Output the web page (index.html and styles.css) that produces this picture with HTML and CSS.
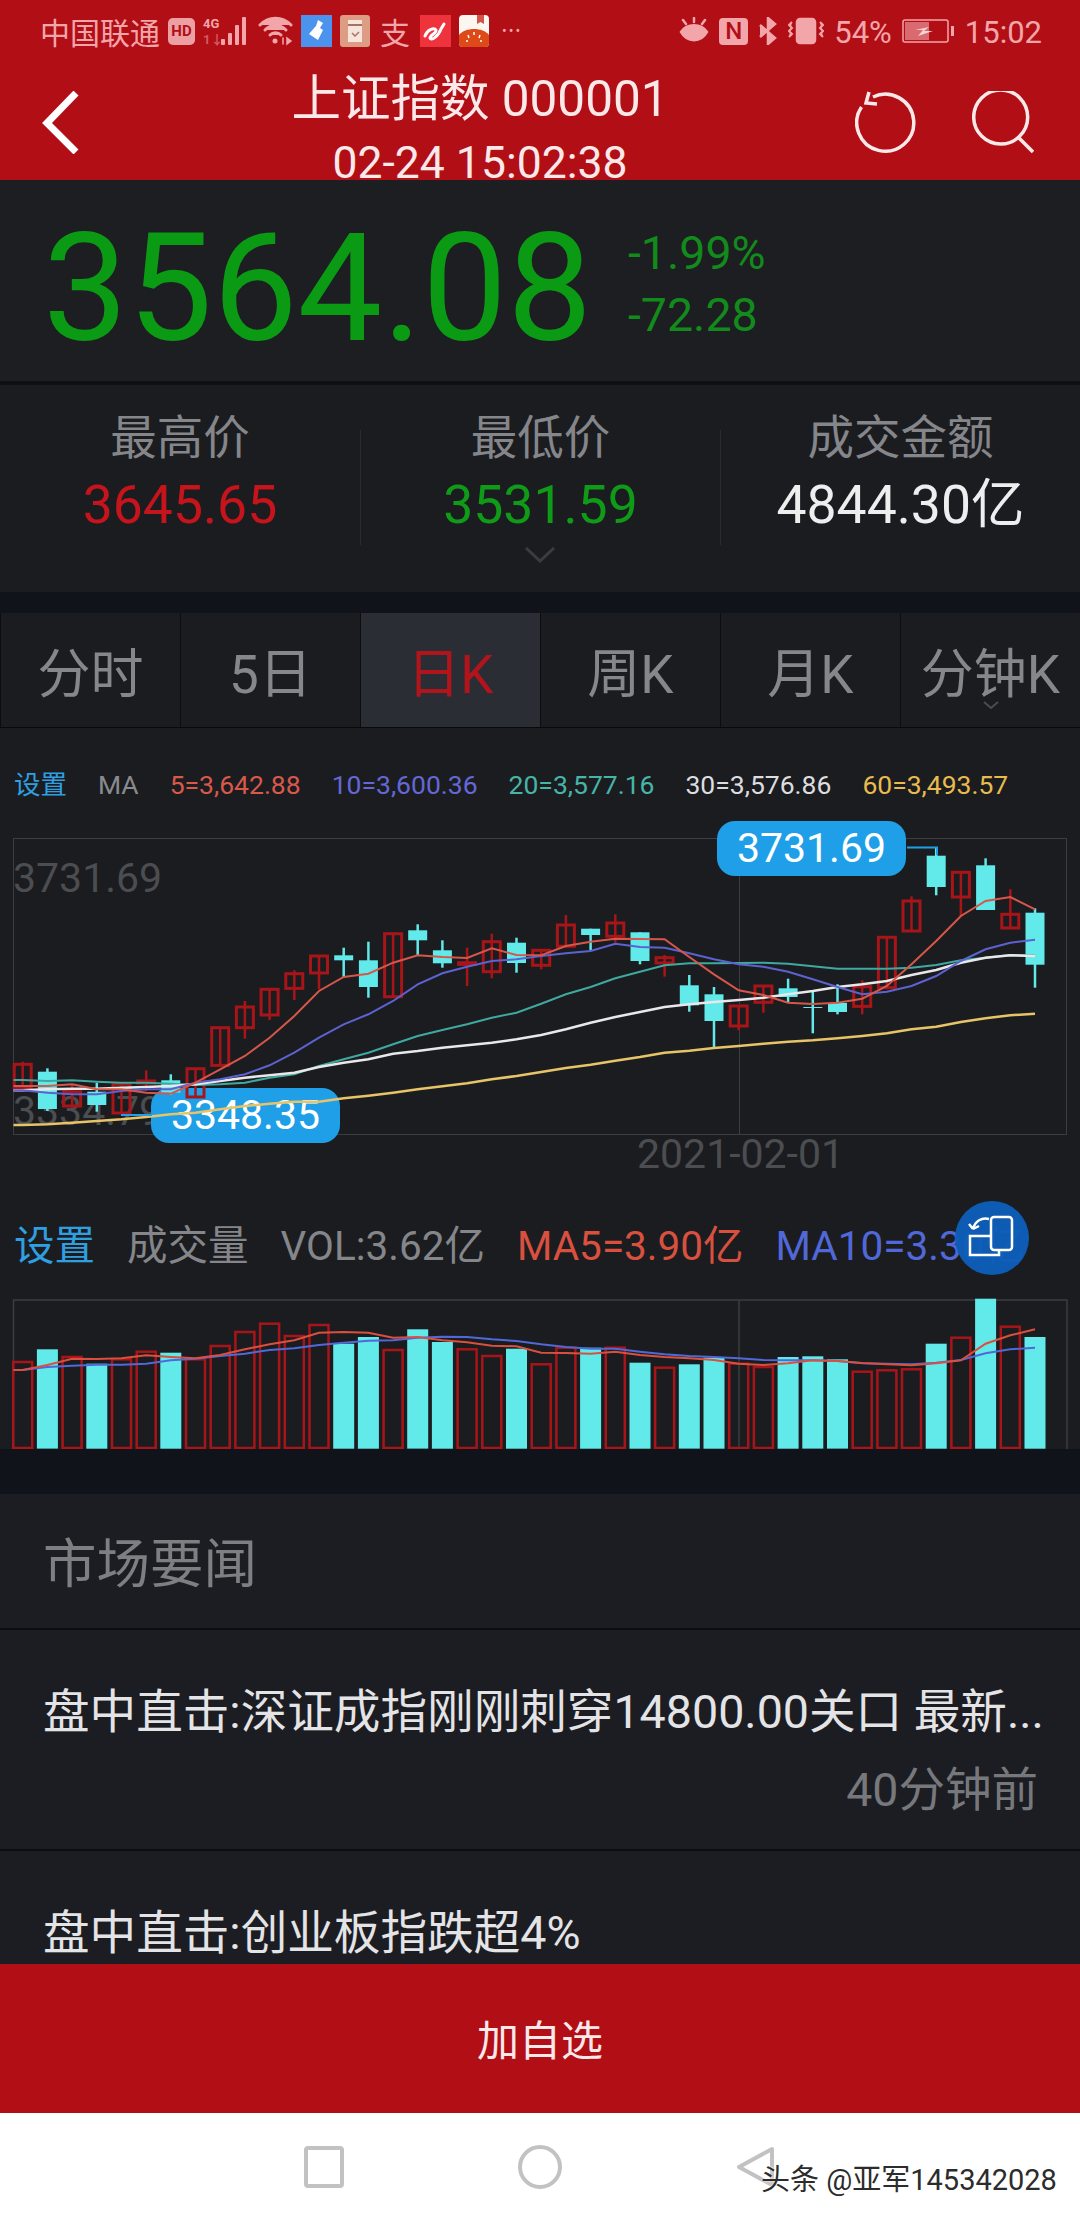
FILE: index.html
```html
<!DOCTYPE html>
<html lang="zh-CN">
<head>
    <meta charset="UTF-8">
    <meta name="viewport" content="width=device-width, initial-scale=1.0">
    <title>上证指数 000001</title>
    <link rel="stylesheet" href="styles.css">
</head>
<body>
    <header class="top">
        <div class="status-bar">
            <div class="status-left">
                <span class="carrier">中国联通</span>
                <span class="hd-badge">HD</span>
                <svg class="ic" width="47" height="30" viewBox="0 0 47 30">
                    <text x="0" y="12" class="mini-text">4G</text>
                    <text x="0" y="28" class="mini-text dim">1↓</text>
                    <rect x="18" y="23" width="4" height="6" rx="1"/>
                    <rect x="25" y="17" width="4" height="12" rx="1"/>
                    <rect x="32" y="9" width="4" height="20" rx="1"/>
                    <rect x="39" y="1" width="4" height="28" rx="1"/>
                </svg>
                <svg class="ic" width="35" height="30" viewBox="0 0 35 30" fill="none" stroke="#f2a6aa" stroke-width="3" stroke-linecap="round">
                    <path d="M2 9C11 0 24 0 33 9"/>
                    <path d="M7 14C13 8 22 8 28 14"/>
                    <path d="M12 19C15 16 20 16 23 19"/>
                    <circle cx="17" cy="25" r="2.5" fill="#f2a6aa" stroke="none"/>
                    <path d="M25 22v6M33 25l-4 -3v6z" stroke-width="1.5"/>
                </svg>
                <svg class="ic" width="31" height="32" viewBox="0 0 31 32">
                    <rect width="31" height="32" fill="#4c93ee"/>
                    <path d="M17 5l5 3-3 5 3 2-5 10-9-6 6-7 1-1z" fill="#fff"/>
                </svg>
                <svg class="ic" width="30" height="32" viewBox="0 0 30 32">
                    <rect width="30" height="32" rx="3" fill="#dd9c84"/>
                    <rect x="8" y="5" width="14" height="22" fill="#f6e5dc"/>
                    <rect x="8" y="9" width="14" height="2" fill="#a8735e"/>
                    <path d="M12 18l3 3 4-4" fill="none" stroke="#a8735e" stroke-width="1.5"/>
                </svg>
                <span class="zhi">支</span>
                <svg class="ic" width="31" height="32" viewBox="0 0 31 32">
                    <rect width="31" height="32" fill="#ee333d"/>
                    <path d="M5 21c2-6 9-9 11-6 1 3-6 5-6 8 1 3 8-1 11-9l3-5" fill="none" stroke="#fff" stroke-width="3" stroke-linecap="round"/>
                </svg>
                <svg class="ic" width="30" height="32" viewBox="0 0 30 32">
                    <rect width="30" height="32" rx="4" fill="#fdf6f0"/>
                    <path d="M0 20c6-8 24-8 30 0v8a4 4 0 0 1-4 4H4a4 4 0 0 1-4-4z" fill="#dd4a17"/>
                    <path d="M18 0h7v9l-3.500-2-3.500 2z" fill="#d2534a"/>
                    <path d="M15 17v3M9 20l1 3M21 20l-1 3M7 26h2M21 26h2" stroke="#fff" stroke-width="1.500"/>
                </svg>
                <span class="more-dots">•••</span>
            </div>
            <div class="status-right">
                <svg class="ic" width="30" height="28" viewBox="0 0 30 28" fill="none" stroke="#f2a6aa" stroke-width="2.500" stroke-linecap="round">
                    <path d="M2 15C8 6 22 6 28 15C22 26 8 26 2 15z"/>
                    <circle cx="15" cy="15" r="5" fill="#f2a6aa" stroke="none"/>
                    <path d="M4 3l3 4M15 1v4M26 3l-3 4"/>
                </svg>
                <span class="nfc">N</span>
                <svg class="ic" width="20" height="28" viewBox="0 0 20 28" fill="none" stroke="#f2a6aa" stroke-width="2.500">
                    <path d="M2 8l15 13-7 6V1l7 6L2 20"/>
                </svg>
                <svg class="ic" width="36" height="28" viewBox="0 0 36 28" fill="none" stroke="#f2a6aa" stroke-width="2.500">
                    <rect x="9" y="2" width="18" height="24" rx="3"/>
                    <path d="M4 5l-3 3 3 3-3 3 3 3-3 3M32 5l3 3-3 3 3 3-3 3 3 3" stroke-width="2"/>
                </svg>
                <span class="battery-pct">54%</span>
                <svg class="ic" width="53" height="24" viewBox="0 0 53 24">
                    <rect x="1" y="1" width="45" height="22" rx="2" fill="none" stroke="#f2a6aa" stroke-width="1.500"/>
                    <rect x="3" y="3" width="24" height="18" fill="#d96b70"/>
                    <rect x="49" y="7" width="3" height="10" fill="#f2a6aa"/>
                    <path d="M13 11l14-3-5 4h9l-15 5 5-6z" fill="#f6d2d2"/>
                </svg>
                <span class="clock">15:02</span>
            </div>
        </div>
        <div class="nav-row">
            <svg class="back-btn" width="37" height="63" viewBox="0 0 37 63" fill="none" stroke="#fff" stroke-width="7">
                <path d="M34 2L5 32l29 29"/>
            </svg>
            <div class="title-block">
                <div class="title">上证指数 000001</div>
                <div class="subtitle">02-24 15:02:38</div>
            </div>
            <div class="nav-actions">
                <svg width="62" height="64" viewBox="0 0 62 64" fill="none" stroke="#fbe9ea" stroke-width="3.500">
                    <path d="M18 6A28.500 28.500 0 1 1 6.500 16"/>
                    <path d="M14 1l-3 11 11 1"/>
                </svg>
                <svg width="62" height="64" viewBox="0 0 62 64" fill="none" stroke="#fbe9ea" stroke-width="3.500">
                    <circle cx="28.700" cy="26" r="27"/>
                    <path d="M46 46l15 15"/>
                </svg>
            </div>
        </div>
    </header>

    <main class="content">
        <section class="quote">
            <div class="last-price">3564.08</div>
            <div class="change">
                <div>-1.99%</div>
                <div>-72.28</div>
            </div>
        </section>

        <section class="stats">
            <div class="stat">
                <div class="stat-label">最高价</div>
                <div class="stat-value up">3645.65</div>
            </div>
            <div class="stat">
                <div class="stat-label">最低价</div>
                <div class="stat-value down">3531.59</div>
            </div>
            <div class="stat">
                <div class="stat-label">成交金额</div>
                <div class="stat-value">4844.30亿</div>
            </div>
            <svg class="expand" width="30" height="16" viewBox="0 0 30 16" fill="none" stroke="#3a3c42" stroke-width="3">
                <path d="M1 1l14 13L29 1"/>
            </svg>
        </section>

        <nav class="tabs">
            <div class="tab">分时</div>
            <div class="tab">5日</div>
            <div class="tab active">日K</div>
            <div class="tab">周K</div>
            <div class="tab">月K</div>
            <div class="tab">分钟K
                <svg class="tab-arrow" width="16" height="9" viewBox="0 0 16 9" fill="none" stroke="#4a4c52" stroke-width="2">
                    <path d="M1 1l7 6 7-6"/>
                </svg>
            </div>
        </nav>

        <div class="ma-legend">
            <span class="link">设置</span>
            <span class="muted">MA</span>
            <span class="ma5">5=3,642.88</span>
            <span class="ma10">10=3,600.36</span>
            <span class="ma20">20=3,577.16</span>
            <span class="ma30">30=3,576.86</span>
            <span class="ma60">60=3,493.57</span>
        </div>

        <section class="kline">
            <div class="chart-frame"></div>
            <span class="axis-label axis-high">3731.69</span>
            <span class="axis-label axis-low">3334.79</span>
            <span class="axis-label axis-date">2021-02-01</span>
            <span class="bubble bubble-low">3348.35</span>
            <svg id="klineChart" class="chart" width="1080" height="330" viewBox="0 0 1080 330"></svg>
            <span class="bubble bubble-high">3731.69</span>
        </section>

        <section class="volume">
            <div class="vol-legend">
                <span class="link">设置</span>
                <span class="gray">成交量</span>
                <span class="gray">VOL:3.62亿</span>
                <span class="vol-ma5">MA5=3.90亿</span>
                <span class="vol-ma10">MA10=3.30亿</span>
            </div>
            <svg id="volChart" class="chart" width="1080" height="158" viewBox="0 90 1080 158"></svg>
            <div class="float-btn">
                <svg width="74" height="74" viewBox="0 0 74 74" fill="none" stroke="#fff" stroke-width="2.500">
                    <rect x="36" y="16" width="21" height="33" rx="3"/>
                    <path d="M36 35H15v19h29v-5"/>
                    <path d="M18 28C20 20 27 16 34 18M18 28l-4-5M18 28l6-3"/>
                </svg>
            </div>
        </section>

        <section class="news">
            <h2 class="news-head">市场要闻</h2>
            <div class="news-item">
                <div class="news-title">盘中直击:深证成指刚刚刺穿14800.00关口 最新...</div>
                <div class="news-time">40分钟前</div>
            </div>
            <div class="news-item">
                <div class="news-title">盘中直击:创业板指跌超4%</div>
            </div>
        </section>
    </main>

    <div class="add-bar">加自选</div>

    <footer class="sys-nav">
        <svg width="40" height="42" viewBox="0 0 40 42" fill="none" stroke="#c2c2c2" stroke-width="4">
            <rect x="2" y="2" width="36" height="38" rx="2"/>
        </svg>
        <svg width="44" height="44" viewBox="0 0 44 44" fill="none" stroke="#c2c2c2" stroke-width="4">
            <circle cx="22" cy="22" r="20"/>
        </svg>
        <svg width="40" height="42" viewBox="0 0 40 42" fill="none" stroke="#c2c2c2" stroke-width="4" stroke-linejoin="round">
            <path d="M36 3L3 21l33 18z"/>
        </svg>
        <span class="watermark">头条 @亚军145342028</span>
    </footer>

    <script src="chart.js"></script>
</body>
</html>
```

FILE: styles.css
```css
* {
    box-sizing: border-box;
}

body {
    margin: 0;
    width: 1080px;
    height: 2220px;
    display: flex;
    flex-direction: column;
    overflow: hidden;
    background: #1b1c20;
    font-family: Roboto, "Noto Sans CJK SC", sans-serif;
}

/* top red header */
.top {
    height: 180px;
    flex: none;
    background: #b20e16;
    color: #fbe9ea;
}

.status-bar {
    height: 62px;
    padding: 0 38px 0 40px;
    display: flex;
    justify-content: space-between;
    align-items: center;
    color: #f2a6aa;
}

.status-left,
.status-right {
    display: flex;
    align-items: center;
    gap: 8px;
}

.status-right {
    gap: 10px;
}

.ic {
    display: block;
    fill: #f2a6aa;
}

.carrier {
    font-size: 30px;
}

.hd-badge {
    width: 27px;
    height: 27px;
    border-radius: 5px;
    background: #eda0a4;
    color: #b20e16;
    font-size: 15px;
    font-weight: 700;
    line-height: 27px;
    text-align: center;
}

.mini-text {
    font-size: 13px;
    font-weight: 700;
}

.dim {
    opacity: 0.5;
}

.zhi {
    width: 34px;
    font-size: 30px;
    text-align: center;
}

.more-dots {
    margin-left: 5px;
    font-size: 14px;
    letter-spacing: 2px;
}

.nfc {
    width: 29px;
    height: 27px;
    border-radius: 4px;
    background: #f2a6aa;
    color: #b20e16;
    font-size: 24px;
    font-weight: 500;
    line-height: 27px;
    text-align: center;
}

.battery-pct,
.clock {
    padding-top: 3px;
    font-size: 31px;
}

.nav-row {
    height: 118px;
    padding: 0 46px 0 42px;
    display: flex;
    align-items: flex-start;
}

.back-btn {
    margin-top: 29px;
    flex: none;
}

.title-block {
    margin-left: 211px;
    width: 380px;
    text-align: center;
    white-space: nowrap;
}

.title {
    font-size: 49.500px;
    line-height: 60px;
    margin-top: 7px;
}

.subtitle {
    font-size: 44.500px;
    line-height: 44px;
    margin-top: 12px;
}

.nav-actions {
    margin-left: auto;
    margin-top: 29px;
    display: flex;
    gap: 55px;
}

.content {
    flex: 1;
    min-height: 0;
    overflow: hidden;
}

/* price block */
.quote {
    height: 205px;
    padding: 42px 0 0 43px;
    display: flex;
    background: #1c1e21;
    border-bottom: 4px solid #0f1013;
}

.last-price {
    font-size: 151px;
    line-height: 134px;
    color: #0a9a14;
}

.change {
    margin-left: 36px;
    font-size: 46.500px;
    line-height: 62px;
    color: #128a1c;
}

.stats {
    position: relative;
    height: 207px;
    display: grid;
    grid-template-columns: repeat(3, 360px);
    background: #1b1c20;
}

.stat {
    margin-top: 45px;
    height: 115px;
    text-align: center;
    border-left: 1px solid #2a2b2f;
}

.stat:first-child {
    border-left: 0;
}

.stat-label {
    margin-top: -22px;
    font-size: 46.500px;
    line-height: 60px;
    color: #85868a;
}

.stat-value {
    margin-top: 7px;
    font-size: 53.500px;
    line-height: 60px;
    color: #eeeeef;
}

.stat-value.up {
    color: #c5141b;
}

.stat-value.down {
    color: #0f9a18;
}

.expand {
    position: absolute;
    left: 525px;
    top: 162px;
}

.tabs {
    margin-top: 21px;
    height: 115px;
    display: grid;
    grid-template-columns: repeat(6, 1fr);
    grid-auto-rows: 114px;
    box-shadow: 0 -21px 0 #11131a;
    border-bottom: 1px solid #08090b;
    background: #1b1c20;
}

.tab {
    position: relative;
    height: 114px;
    font-size: 53px;
    line-height: 124px;
    text-align: center;
    white-space: nowrap;
    color: #86878b;
    border-left: 1px solid #0c0d10;
}

.tab.active {
    background: #2b2d35;
    color: #b2141c;
}

.tab-arrow {
    position: absolute;
    left: 82px;
    top: 88px;
}

/* legends */
.ma-legend {
    height: 93px;
    padding: 42px 0 0 14px;
    display: flex;
    gap: 31px;
    font-size: 26.500px;
    line-height: 30px;
    white-space: nowrap;
}

.link {
    color: #2f9fe0;
}

.muted {
    color: #8a8b8f;
}

.ma5 { color: #d9584a; }
.ma10 { color: #6468d6; }
.ma20 { color: #46b5a8; }
.ma30 { color: #dddddf; }
.ma60 { color: #e8bb4e; }

/* candlestick area */
.kline {
    position: relative;
    height: 370px;
}

.chart {
    display: block;
    position: relative;
}

.chart-frame {
    position: absolute;
    left: 13px;
    top: 17px;
    width: 1054px;
    height: 297px;
    border: 1.500px solid #3c3d40;
}

.chart-frame::after {
    content: "";
    position: absolute;
    left: 725px;
    top: 0;
    bottom: 0;
    border-left: 1.500px solid #3c3d40;
}

.axis-label {
    position: absolute;
    left: 13px;
    font-size: 41px;
    line-height: 40px;
    color: #4c4d50;
}

.axis-high {
    top: 37px;
}

.axis-low {
    top: 270px;
}

.axis-date {
    left: 637px;
    top: 313px;
}

.bubble {
    position: absolute;
    height: 55px;
    width: 189px;
    border-radius: 18px;
    background: #1f9fe8;
    color: #fff;
    font-size: 41px;
    line-height: 55px;
    text-align: center;
}

.bubble-low {
    left: 151px;
    top: 267px;
}

.bubble-high {
    left: 717px;
    top: 0;
}

/* volume area */
.volume {
    position: relative;
}

.vol-legend {
    height: 100px;
    padding: 35px 0 0 14px;
    display: flex;
    gap: 32px;
    font-size: 40.500px;
    line-height: 40px;
    white-space: nowrap;
}

.gray {
    color: #85868a;
}

.vol-ma5 {
    color: #d9503f;
}

.vol-ma10 {
    color: #5068d8;
}

.float-btn {
    position: absolute;
    left: 955px;
    top: 10px;
    width: 74px;
    height: 74px;
    border-radius: 50%;
    background: rgba(13, 94, 184, 0.96);
}

.float-btn svg {
    display: block;
}

/* news list */
.news {
    margin-top: 45px;
    box-shadow: 0 -45px 0 #11131a;
    background: #1b1d23;
}

.news-head {
    margin: 0;
    height: 136px;
    padding: 0 43px;
    font-size: 53.500px;
    font-weight: 400;
    line-height: 142px;
    color: #7e7f83;
    border-bottom: 2px solid #0c0d10;
}

.news-item {
    height: 221px;
    padding: 52px 42px 0 43px;
    border-bottom: 2px solid #0c0d10;
}

.news-title {
    font-size: 46.600px;
    line-height: 60px;
    color: #e4e4e6;
    white-space: nowrap;
}

.news-time {
    margin-top: 18px;
    font-size: 46.500px;
    line-height: 60px;
    text-align: right;
    color: #77787c;
}

.add-bar {
    flex: none;
    height: 149px;
    background: #b20e16;
    color: #fbe9ea;
    font-size: 42px;
    line-height: 155px;
    text-align: center;
}

.sys-nav {
    flex: none;
    position: relative;
    height: 107px;
    background: #fff;
    padding-left: 304px;
    display: flex;
    align-items: center;
    gap: 174px;
}

.watermark {
    position: absolute;
    left: 761px;
    top: 49px;
    font-size: 29px;
    line-height: 36px;
    color: #2c2c2c;
    white-space: nowrap;
    text-shadow: 0 0 3px #fff;
}
```

FILE: chart.js
```js
// all chart values are in thirds of a pixel, top of the svg = 0
const CYAN = '#62e9ea';
const RED = '#a81519';

// box top, box bottom, wick top, wick bottom, up = red
const candles = [
    [730, 800, 722, 808, 1], [752, 864, 742, 870, 0], [812, 855, 790, 860, 1], [812, 852, 785, 872, 0],
    [790, 876, 785, 880, 1], [780, 786, 748, 810, 1], [778, 815, 760, 822, 0], [743, 828, 743, 828, 1],
    [620, 733, 620, 733, 1], [558, 620, 540, 653, 1], [505, 582, 505, 597, 1], [458, 502, 448, 537, 1],
    [405, 456, 405, 505, 1], [403, 418, 380, 470, 0], [418, 498, 362, 530, 0], [338, 527, 338, 527, 1],
    [328, 358, 310, 405, 0], [388, 427, 358, 440, 0], [425, 430, 380, 495, 1], [362, 452, 338, 472, 1],
    [365, 426, 350, 455, 0], [388, 433, 385, 445, 1], [312, 376, 282, 376, 1], [323, 342, 323, 388, 0],
    [306, 346, 280, 365, 1], [334, 420, 334, 430, 0], [410, 426, 402, 467, 1], [493, 553, 462, 572, 0],
    [520, 600, 498, 678, 0], [555, 615, 555, 628, 1], [495, 544, 495, 575, 1], [502, 528, 473, 543, 0],
    [558, 561, 510, 637, 0], [546, 573, 490, 580, 0], [497, 556, 478, 580, 1], [349, 500, 349, 505, 1],
    [240, 330, 226, 330, 1], [104, 198, 80, 223, 0], [154, 228, 150, 285, 1], [133, 267, 112, 267, 0],
    [280, 321, 205, 321, 1], [275, 431, 262, 500, 0]
];

// colour, stroke width, values
const maLines = [
    ['#e8c468', 2.5, [912, 910, 905, 900, 895, 888, 880, 875, 865, 855, 848, 842, 842, 832, 824, 815, 805, 796, 787, 775, 765, 753, 741, 731, 719, 708, 695, 689, 681, 675, 668, 662, 658, 652, 645, 637, 625, 617, 603, 592, 583, 578]],
    ['#3fa9a0', 2, [777, 780, 778, 782, 785, 785, 788, 792, 790, 785, 770, 760, 735, 715, 695, 670, 645, 627, 610, 590, 575, 548, 520, 498, 472, 452, 433, 427, 427, 426, 425, 428, 436, 443, 443, 443, 440, 432, 418, 410, 402, 403]],
    ['#e8e8ea', 2.5, [808, 805, 803, 803, 800, 798, 795, 790, 780, 770, 763, 755, 738, 725, 715, 698, 690, 680, 673, 665, 655, 642, 625, 605, 588, 573, 558, 550, 543, 537, 530, 520, 510, 498, 490, 480, 462, 447, 425, 410, 403, 405]],
    ['#5c62d0', 2, [808, 815, 820, 820, 810, 805, 805, 785, 775, 760, 733, 695, 650, 610, 580, 540, 490, 457, 437, 420, 415, 405, 397, 390, 368, 378, 380, 397, 415, 430, 437, 452, 475, 498, 520, 512, 495, 465, 420, 385, 365, 356]],
    ['#d6574a', 2, [795, 795, 790, 805, 805, 815, 818, 785, 745, 705, 650, 585, 510, 468, 458, 425, 403, 408, 411, 382, 402, 403, 375, 362, 353, 354, 355, 408, 460, 508, 522, 545, 549, 545, 533, 495, 430, 360, 285, 240, 228, 265]]
];

// bar top, up = red
const volumes = [
    [483, 1], [445, 0], [468, 1], [488, 0], [475, 1], [452, 1], [455, 0], [475, 1], [435, 1], [393, 1], [368, 1],
    [405, 1], [372, 1], [428, 0], [408, 0], [447, 1], [385, 0], [423, 0], [445, 1], [465, 1], [443, 0], [490, 1],
    [440, 1], [440, 0], [440, 1], [485, 0], [500, 1], [490, 0], [470, 0], [488, 1], [498, 1], [468, 0], [466, 0],
    [475, 0], [512, 1], [508, 1], [505, 1], [428, 0], [410, 1], [293, 0], [377, 1], [408, 0]
];

const volLines = [
    ['#5068d8', 2, [507, 498, 494, 491, 491, 488, 478, 473, 465, 458, 447, 442, 432, 425, 419, 418, 410, 407, 408, 415, 420, 430, 438, 443, 443, 452, 460, 465, 468, 472, 477, 478, 478, 480, 487, 488, 490, 485, 477, 457, 445, 440]],
    ['#d9503f', 2, [507, 492, 473, 474, 472, 463, 468, 472, 462, 445, 430, 418, 395, 393, 395, 410, 408, 418, 424, 434, 436, 455, 456, 458, 452, 462, 468, 472, 477, 488, 492, 487, 478, 480, 486, 490, 493, 487, 478, 428, 403, 385]]
];

const px = v => (v / 3).toFixed(1);
const cx = i => (22.7 + i * 24.69).toFixed(1);

// lines run in from the left edge of the frame
function polyline(line) {
    const values = line[2];
    const points = values.map((v, i) => cx(i) + ',' + px(v)).join(' ');
    return `<polyline points="13.5,${px(values[0])} ${points}" fill="none" stroke="${line[0]}" stroke-width="${line[1]}"/>`;
}

function drawKline() {
    let html = '';
    candles.forEach((c, i) => {
        const x = cx(i);
        const color = c[4] ? RED : CYAN;
        html += `<line x1="${x}" x2="${x}" y1="${px(c[2])}" y2="${px(c[3])}" stroke="${color}" stroke-width="2.5"/>`;
        if (c[4]) {
            html += `<rect x="${x - 8.5}" y="${px(c[0])}" width="17" height="${px(c[1] - c[0])}" fill="none" stroke="${RED}" stroke-width="3"/>`;
        } else {
            html += `<rect x="${x - 9.5}" y="${px(c[0])}" width="19" height="${px(c[1] - c[0])}" fill="${CYAN}"/>`;
        }
    });
    maLines.forEach(l => { html += polyline(l); });
    // leader lines from the high and low bubbles
    html += '<path d="M907 26.500H937V34M121 294H152" fill="none" stroke="#1f9fe8" stroke-width="2"/>';
    document.getElementById('klineChart').innerHTML = html;
}

function drawVolume() {
    const base = 743;
    let html = '<path d="M13.500 248V99H1067V248M739 99V248" fill="none" stroke="#3c3d40" stroke-width="1.500"/>';
    volumes.forEach((v, i) => {
        const x = cx(i);
        if (v[1]) {
            html += `<rect x="${x - 9.5}" y="${px(v[0])}" width="19" height="${px(base - v[0] - 2)}" fill="none" stroke="${RED}" stroke-width="2.5"/>`;
        } else {
            html += `<rect x="${x - 10.5}" y="${px(v[0])}" width="21" height="${px(base - v[0])}" fill="${CYAN}"/>`;
        }
    });
    volLines.forEach(l => { html += polyline(l); });
    document.getElementById('volChart').innerHTML = html;
}

drawKline();
drawVolume();
```
